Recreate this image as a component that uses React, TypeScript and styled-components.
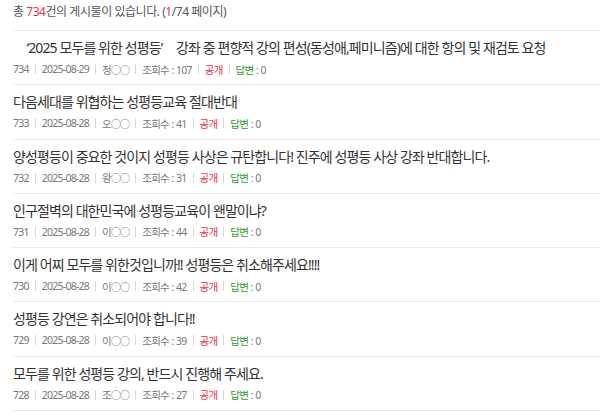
import { Fragment } from "react";
import styled, { createGlobalStyle } from "styled-components";

const GlobalStyle = createGlobalStyle`
  body {
    margin: 0;
    background: #fff;
    font-family: "Noto Sans", "Noto Sans CJK KR", sans-serif;
  }
`;

const Board = styled.div`
  padding-left: 13px;
  width: 587px;
  overflow: hidden;
`;

const Summary = styled.p`
  margin: 0;
  height: 30px;
  line-height: 24px;
  font-size: 12px;
  letter-spacing: -0.45px;
  color: #555;
  white-space: nowrap;
  border-bottom: 1px solid #ececec;
`;

const Red = styled.em`
  font-style: normal;
  color: #e8314a;
`;

const List = styled.ul`
  list-style: none;
  margin: 0;
  padding: 0;
`;

const Row = styled.li`
  padding-top: 6px;
  height: 47.3px;
  border-bottom: 1px solid #ececec;
`;

const Title = styled.a`
  display: block;
  height: 22px;
  line-height: 22px;
  font-size: 14px;
  letter-spacing: -0.9px;
  color: #333;
  text-decoration: none;
  white-space: pre;
`;

const Meta = styled.div`
  display: flex;
  align-items: center;
  margin-top: 1px;
  height: 18px;
  font-size: 10.5px;
  letter-spacing: -0.75px;
  word-spacing: 0.5px;
  color: #777;
  white-space: pre;
`;

const Item = styled.span<{ $tone?: "red" | "green" }>`
  color: ${(p) => (p.$tone === "red" ? "#e8314a" : p.$tone === "green" ? "#2e9b2e" : "#777")};
`;

const Masked = styled.span`
  font-size: 10px;
  letter-spacing: -0.9px;
`;

const Sep = styled.i`
  display: inline-block;
  width: 1px;
  height: 10px;
  background: #d8d8d8;
  margin: 0 6px 0 6px;
`;

const Gray = styled.span`
  color: #777;
`;

type Post = {
  no: number;
  title: string;
  date: string;
  writer: string;
  views: number;
};

const posts: Post[] = [
  {
    no: 734,
    title: "     \u20182025 모두를 위한 성평등\u2019     강좌 중 편향적 강의 편성(동성애,페미니즘)에 대한 항의 및 재검토 요청",
    date: "2025-08-29",
    writer: "정",
    views: 107,
  },
  { no: 733, title: "다음세대를 위협하는 성평등교육 절대반대", date: "2025-08-28", writer: "오", views: 41 },
  {
    no: 732,
    title: "양성평등이 중요한 것이지 성평등 사상은 규탄합니다! 진주에 성평등 사상 강좌 반대합니다.",
    date: "2025-08-28",
    writer: "왕",
    views: 31,
  },
  { no: 731, title: "인구절벽의 대한민국에 성평등교육이 왠말이냐?", date: "2025-08-28", writer: "이", views: 44 },
  { no: 730, title: "이게 어찌 모두를 위한것입니까!! 성평등은 취소해주세요!!!!", date: "2025-08-28", writer: "이", views: 42 },
  { no: 729, title: "성평등 강연은 취소되어야 합니다!!", date: "2025-08-28", writer: "이", views: 39 },
  { no: 728, title: "모두를 위한 성평등 강의, 반드시 진행해 주세요.", date: "2025-08-28", writer: "조", views: 27 },
];

export default function App() {
  return (
    <>
      <GlobalStyle />
      <Board>
        <Summary>
          총 <Red>734</Red>건의 게시물이 있습니다. (<Red>1</Red>/74 페이지)
        </Summary>
        <List>
          {posts.map((post) => {
            const parts = [
              <Item>{post.no}</Item>,
              <Item>{post.date}</Item>,
              <Item>
                {post.writer}
                <Masked>○○</Masked>
              </Item>,
              <Item>조회수 : {post.views}</Item>,
              <Item $tone="red">공개</Item>,
              <Item $tone="green">
                답변<Gray> : 0</Gray>
              </Item>,
            ];
            return (
              <Row key={post.no}>
                <Title href="#">{post.title}</Title>
                <Meta>
                  {parts.map((part, i) => (
                    <Fragment key={i}>
                      {i > 0 && <Sep />}
                      {part}
                    </Fragment>
                  ))}
                </Meta>
              </Row>
            );
          })}
        </List>
      </Board>
    </>
  );
}
